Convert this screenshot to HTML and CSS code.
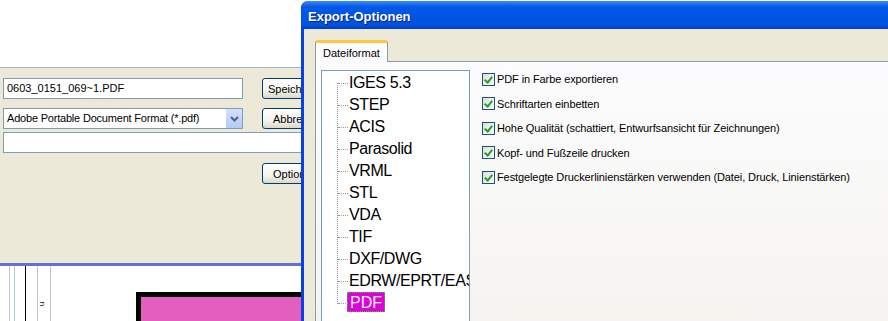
FILE: index.html
```html
<!DOCTYPE html>
<html lang="de">
<head>
    <meta charset="UTF-8">
    <title>Export-Optionen</title>
    <link rel="stylesheet" href="styles.css">
</head>
<body>
    <div class="desktop">
        <div class="save-window">
            <div class="save-top"></div>
            <div class="save-panel">
                <div class="save-row">
                    <div class="field name">0603_0151_069~1.PDF</div>
                    <button class="xp-btn save">Speichern</button>
                </div>
                <div class="save-row second">
                    <div class="field select">
                        <span>Adobe Portable Document Format (*.pdf)</span>
                        <span class="drop">
                            <svg width="9" height="6" viewBox="0 0 9 6"><path d="M1 1 L4.5 4.5 L8 1" fill="none" stroke="#4d6185" stroke-width="2"/></svg>
                        </span>
                    </div>
                    <button class="xp-btn cancel">Abbrechen</button>
                </div>
                <div class="field wide"></div>
                <div class="save-row options-row">
                    <button class="xp-btn options">Optionen...</button>
                </div>
            </div>
            <div class="doc-area">
                <div class="ruler">
                    <span class="rline grey"></span>
                    <span class="rline blue"></span>
                    <span class="rline black"></span>
                    <span class="rline grey mark"><i>n</i></span>
                    <span class="rline grey"></span>
                </div>
                <div class="sheet"></div>
            </div>
        </div>

        <div class="dialog">
            <div class="titlebar">Export-Optionen</div>
            <div class="dialog-body">
                <div class="tabs">
                    <div class="tab active">Dateiformat</div>
                </div>
                <div class="tab-panel">
                    <div class="tree">
                        <ul>
                            <li>IGES 5.3</li>
                            <li>STEP</li>
                            <li>ACIS</li>
                            <li>Parasolid</li>
                            <li>VRML</li>
                            <li>STL</li>
                            <li>VDA</li>
                            <li>TIF</li>
                            <li>DXF/DWG</li>
                            <li>EDRW/EPRT/EASM</li>
                            <li><span class="selected">PDF</span></li>
                        </ul>
                    </div>
                    <div class="checks">
                        <label class="check"><span class="box"></span>PDF in Farbe exportieren</label>
                        <label class="check"><span class="box"></span>Schriftarten einbetten</label>
                        <label class="check"><span class="box"></span>Hohe Qualität (schattiert, Entwurfsansicht für Zeichnungen)</label>
                        <label class="check"><span class="box"></span>Kopf- und Fußzeile drucken</label>
                        <label class="check"><span class="box"></span>Festgelegte Druckerlinienstärken verwenden (Datei, Druck, Linienstärken)</label>
                    </div>
                </div>
            </div>
        </div>
    </div>
</body>
</html>
```

FILE: styles.css
```css
* {
    margin: 0;
    padding: 0;
    box-sizing: border-box;
}

body {
    font-family: 'Liberation Sans', Arial, sans-serif;
    font-size: 11px;
    color: #000;
    background: #fff;
    overflow: hidden;
}

.desktop {
    position: relative;
    width: 888px;
    height: 321px;
    overflow: hidden;
}

/* window behind the dialog */
.save-top {
    height: 67px;
    background: #fff;
}

.save-panel {
    height: 199px;
    background: #ece9d8;
    border-top: 1px solid #a7b6cc;
    border-bottom: 3px solid #6371d6;
    padding: 10px 0 0 3px;
}

.save-row {
    display: flex;
    align-items: flex-start;
}

.save-row.second {
    margin-top: 9px;
}

.save-row.options-row {
    margin-top: 10px;
}

.field {
    height: 21px;
    border: 1px solid #7f9db9;
    background: #fff;
    padding: 3px 0 0 3px;
    white-space: nowrap;
}

.field.name,
.field.select {
    width: 240px;
}

.field.select {
    display: flex;
    justify-content: space-between;
    padding: 0 0 0 3px;
    line-height: 19px;
    letter-spacing: -0.2px;
}

.field.wide {
    width: 320px;
    margin-top: 3px;
}

.drop {
    width: 17px;
    height: 19px;
    background: linear-gradient(#d3e0fd, #b6cbf8);
    border-left: 1px solid #fff;
    display: flex;
    align-items: center;
    justify-content: center;
}

.xp-btn {
    font-family: 'Liberation Sans', Arial, sans-serif;
    font-size: 11px;
    height: 21px;
    width: 75px;
    margin-left: 19px;
    border: 1px solid #003c74;
    border-radius: 3px;
    background: linear-gradient(#fff, #f4f3ee 60%, #dcd8c8);
    text-align: left;
    padding-left: 5px;
    color: #000;
}

.xp-btn.cancel,
.xp-btn.options {
    padding-left: 10px;
}

.xp-btn.options {
    margin-left: 259px;
}

.doc-area {
    height: 55px;
    display: flex;
    align-items: flex-start;
    background: #fff;
}

.ruler {
    display: flex;
    height: 55px;
}

.rline {
    width: 1px;
    height: 55px;
}

.rline.grey { background: #c4c4c4; }
.rline.blue { background: #a9ccd4; }
.rline.black { background: #000; }

.ruler .rline:nth-child(1) { margin-left: 9px; }
.ruler .rline:nth-child(2) { margin-left: 4px; }
.ruler .rline:nth-child(3) { margin-left: 10px; }
.ruler .rline:nth-child(4) { margin-left: 11px; }
.ruler .rline:nth-child(5) { margin-left: 12px; }

.rline.mark {
    position: relative;
}

.rline.mark i {
    position: absolute;
    left: 3px;
    top: 34px;
    font-style: normal;
    font-size: 8px;
    line-height: 8px;
    transform: rotate(90deg);
}

.sheet {
    margin: 26px 0 0 85px;
    width: 300px;
    height: 60px;
    border: 5px solid #000;
    background: #e35fbf;
}

/* export dialog */
.dialog {
    position: absolute;
    left: 301px;
    top: 1px;
    width: 620px;
    height: 340px;
    background: #0a3fe0;
    border-radius: 7px 7px 0 0;
    overflow: hidden;
}

.titlebar {
    height: 28px;
    padding: 8px 0 0 7px;
    background: linear-gradient(#3c8ef8 0, #1e6cf0 3px, #0458e6 6px, #0055e5 50%, #0052e0 85%, #003fc2 100%);
    color: #fff;
    font-weight: bold;
    font-size: 13px;
    text-shadow: 1px 1px 0 #0a1c80;
}

.dialog-body {
    margin-left: 3px;
    height: 312px;
    background: #ece9d8;
    padding: 11px 0 0 11px;
}

.tabs {
    display: flex;
    height: 21px;
    position: relative;
    z-index: 1;
}

.tab {
    height: 22px;
    width: 73px;
    padding: 4px 0 0 7px;
    background: #fcfcfe;
    border: 1px solid #919b9c;
    border-bottom: none;
    border-top: 3px solid #ffc83c;
    border-radius: 3px 3px 0 0;
}

.tab-panel {
    display: flex;
    align-items: flex-start;
    height: 280px;
    border: 1px solid #919b9c;
    border-right: none;
    background: linear-gradient(#fcfcfe, #f4f3ee);
    padding: 8px 0 0 5px;
}

.tree {
    width: 149px;
    height: 270px;
    background: #fff;
    border: 1px solid #7f9db9;
    padding-top: 1px;
    overflow: hidden;
}

.tree ul {
    list-style: none;
    position: relative;
    padding-left: 27px;
}

.tree ul::before {
    content: "";
    position: absolute;
    left: 15px;
    top: 11px;
    height: 221px;
    border-left: 1px dotted #999;
}

.tree li {
    position: relative;
    height: 22px;
    line-height: 22px;
    font-size: 16px;
    white-space: nowrap;
    letter-spacing: -0.4px;
}

.tree li::before {
    content: "";
    position: absolute;
    left: -11px;
    top: 11px;
    width: 10px;
    border-top: 1px dotted #999;
}

.tree .selected {
    display: inline-block;
    margin-left: -2px;
    padding: 0 2px;
    height: 20px;
    line-height: 19px;
    letter-spacing: 0;
    background: #e000dc;
    color: #fff;
    border: 1px dotted #3ec43e;
}

.checks {
    display: flex;
    flex-direction: column;
    margin: -3px 0 0 12px;
}

.check {
    display: flex;
    align-items: center;
    height: 24.5px;
    white-space: nowrap;
    letter-spacing: -0.1px;
}

.box {
    position: relative;
    width: 13px;
    height: 13px;
    margin-right: 2px;
    border: 1px solid #1c5180;
    background: linear-gradient(135deg, #dcdcd7, #fff);
}

.box::after {
    content: "";
    position: absolute;
    left: 3px;
    top: 1px;
    width: 3px;
    height: 6px;
    border: solid #21a121;
    border-width: 0 2px 2px 0;
    transform: rotate(40deg);
}
```
